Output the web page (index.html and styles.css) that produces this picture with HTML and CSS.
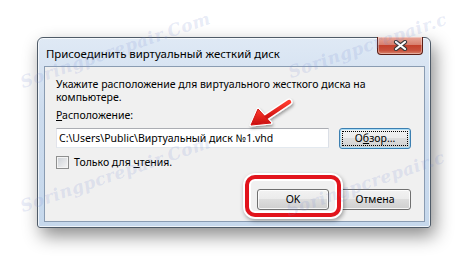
FILE: index.html
```html
<!DOCTYPE html>
<html lang="ru">
<head>
  <meta charset="UTF-8">
  <title>Присоединить виртуальный жесткий диск</title>
  <link rel="stylesheet" href="styles.css">
</head>
<body>
  <div class="stage">
    <div class="window">
      <div class="titlebar">
        <span class="title">Присоединить виртуальный жесткий диск</span>
        <button class="close-btn" title="Закрыть">
          <svg width="17" height="11" viewBox="0 0 17 11">
            <path d="M4 2 L13 9 M13 2 L4 9" stroke="#3a3a3a" stroke-width="4.2" stroke-linecap="round"/>
            <path d="M4 2 L13 9 M13 2 L4 9" stroke="#ffffff" stroke-width="2.2" stroke-linecap="round"/>
          </svg>
        </button>
      </div>
      <div class="client">
        <p class="hint">Укажите расположение для виртуального жесткого диска на<br>компьютере.</p>
        <label class="field-label" for="vhd-path"><u>Р</u>асположение:</label>
        <div class="path-row">
          <input id="vhd-path" class="path-input" type="text" value="C:\Users\Public\Виртуальный диск №1.vhd">
          <button class="btn btn-focus"><span class="focus-rect">О<u>б</u>зор...</span></button>
        </div>
        <label class="check-row">
          <span class="checkbox"></span>
          <span>Только для <u>ч</u>тения.</span>
        </label>
        <div class="actions">
          <button class="btn">OK</button>
          <button class="btn">Отмена</button>
        </div>
      </div>
    </div>

    <!-- пометки поверх скриншота -->
    <div class="highlight"></div>
    <svg class="arrow" width="60" height="40" viewBox="0 0 60 40">
      <defs>
        <linearGradient id="arrowFill" x1="0" y1="0" x2="0" y2="1">
          <stop offset="0" stop-color="#ff3b2f"/>
          <stop offset="1" stop-color="#c70d0d"/>
        </linearGradient>
        <filter id="arrowShadow" x="-30%" y="-30%" width="160%" height="160%">
          <feDropShadow dx="1" dy="2" stdDeviation="1.5" flood-color="#000" flood-opacity="0.35"/>
        </filter>
      </defs>
      <g filter="url(#arrowShadow)">
        <path d="M44 4 L17 22" stroke="#ffffff" stroke-width="7" stroke-linecap="round"/>
        <path d="M6 27 L26 25 L13 11 Z" fill="#ffffff" stroke="#ffffff" stroke-width="3" stroke-linejoin="round"/>
        <path d="M44 4 L17 22" stroke="url(#arrowFill)" stroke-width="4.5" stroke-linecap="round"/>
        <path d="M6 27 L26 25 L13 11 Z" fill="url(#arrowFill)" stroke="#d41212" stroke-width="1" stroke-linejoin="round"/>
      </g>
    </svg>

    <span class="watermark wm-1">Soringpcrepair.Com</span>
    <span class="watermark wm-2">Soringpcrepair.c</span>
    <span class="watermark wm-3">Soringpcrepair.Com</span>
    <span class="watermark wm-4">Soringpcrepair.c</span>
  </div>
</body>
</html>
```

FILE: styles.css
```css
body {
  margin: 0;
  background: #ffffff;
  font-family: "Noto Sans", "Liberation Sans", sans-serif;
  font-size: 10.5px;
  color: #000;
}
.stage {
  position: relative;
  width: 468px;
  height: 266px;
  overflow: hidden;
  padding: 37px 0 0 37px;
  box-sizing: border-box;
}
.window {
  width: 394px;
  height: 191px;
  box-sizing: border-box;
  border: 1px solid #4f5b68;
  border-radius: 6px 6px 3px 3px;
  background: linear-gradient(#dfe9f5, #cddcee 40%, #c6d8ec);
  box-shadow: inset 0 0 0 1px rgba(255,255,255,0.7), 4px 8px 18px rgba(0,0,0,0.45);
  padding: 0 5px 5px 6px;
  display: flex;
  flex-direction: column;
}
.titlebar {
  height: 28px;
  display: flex;
  justify-content: space-between;
  align-items: flex-start;
}
.title {
  margin: 8px 0 0 2px;
  font-size: 11.4px;
  line-height: 15px;
}
.close-btn {
  width: 46px;
  height: 18px;
  margin: -1px 2px 0 0;
  padding: 0;
  border: 1px solid #5b1e16;
  border-top: none;
  border-radius: 0 0 4px 4px;
  background: linear-gradient(#e9a99b, #d8806f 45%, #c4412c 50%, #c8523e 80%, #d98770);
  box-shadow: inset 0 0 0 1px rgba(255,255,255,0.35);
  display: flex;
  align-items: center;
  justify-content: center;
}
.client {
  flex: 1;
  background: #f0f0f0;
  border: 1px solid #8a9cb2;
  padding: 11px 13px 0 11px;
  display: flex;
  flex-direction: column;
}
.hint {
  margin: 0;
  line-height: 13px;
}
.field-label {
  margin-top: 4px;
  line-height: 14px;
}
.path-row {
  display: flex;
  gap: 10px;
  margin-top: 6px;
}
.path-input {
  width: 274px;
  height: 20px;
  box-sizing: border-box;
  border: 1px solid #abadb3;
  border-left-color: #e2e3ea;
  border-right-color: #dbdfe6;
  border-bottom-color: #e3e9ef;
  padding: 0 2px;
  font: inherit;
  background: #fff;
}
.btn {
  width: 72px;
  height: 21px;
  padding: 0;
  font: inherit;
  color: #000;
  border: 1px solid #707070;
  border-radius: 3px;
  background: linear-gradient(#f2f2f2, #ebebeb 49%, #dddddd 50%, #cfcfcf);
  box-shadow: inset 0 0 0 1px rgba(255,255,255,0.8);
  line-height: 17px;
}
.btn-focus {
  border-color: #3c7fb1;
  box-shadow: inset 0 0 0 1px #a9dcf6;
  padding: 2px;
}
.focus-rect {
  display: block;
  border: 1px dotted #000;
  line-height: 13px;
}
.check-row {
  display: flex;
  align-items: center;
  gap: 5px;
  margin-top: 6px;
  line-height: 14px;
}
.checkbox {
  width: 11px;
  height: 11px;
  border: 1px solid #8e8f8f;
  background: linear-gradient(135deg, #cbcfd5, #f6f6f6);
  box-shadow: inset 0 0 0 1px #f4f4f4;
}
.actions {
  display: flex;
  justify-content: flex-end;
  gap: 10px;
  margin-top: 20px;
}
.highlight {
  position: absolute;
  left: 245px;
  top: 175px;
  width: 88px;
  height: 34px;
  border: 4px solid #e2141c;
  border-radius: 10px;
  box-shadow: 0 0 0 2px #ffffff, inset 0 0 0 2px #ffffff, 1px 2px 4px 2px rgba(0,0,0,0.35);
}
.arrow {
  position: absolute;
  left: 245px;
  top: 98px;
}
.watermark {
  position: absolute;
  font-family: "DejaVu Serif", serif;
  font-style: italic;
  font-weight: bold;
  font-size: 17px;
  letter-spacing: 0.5px;
  color: rgba(120, 140, 210, 0.18);
  transform: rotate(-19deg);
  transform-origin: left bottom;
  white-space: nowrap;
}
.wm-1 { left: 24px; top: 72px; }
.wm-2 { left: 292px; top: 62px; }
.wm-3 { left: 24px; top: 196px; }
.wm-4 { left: 290px; top: 200px; }
```
